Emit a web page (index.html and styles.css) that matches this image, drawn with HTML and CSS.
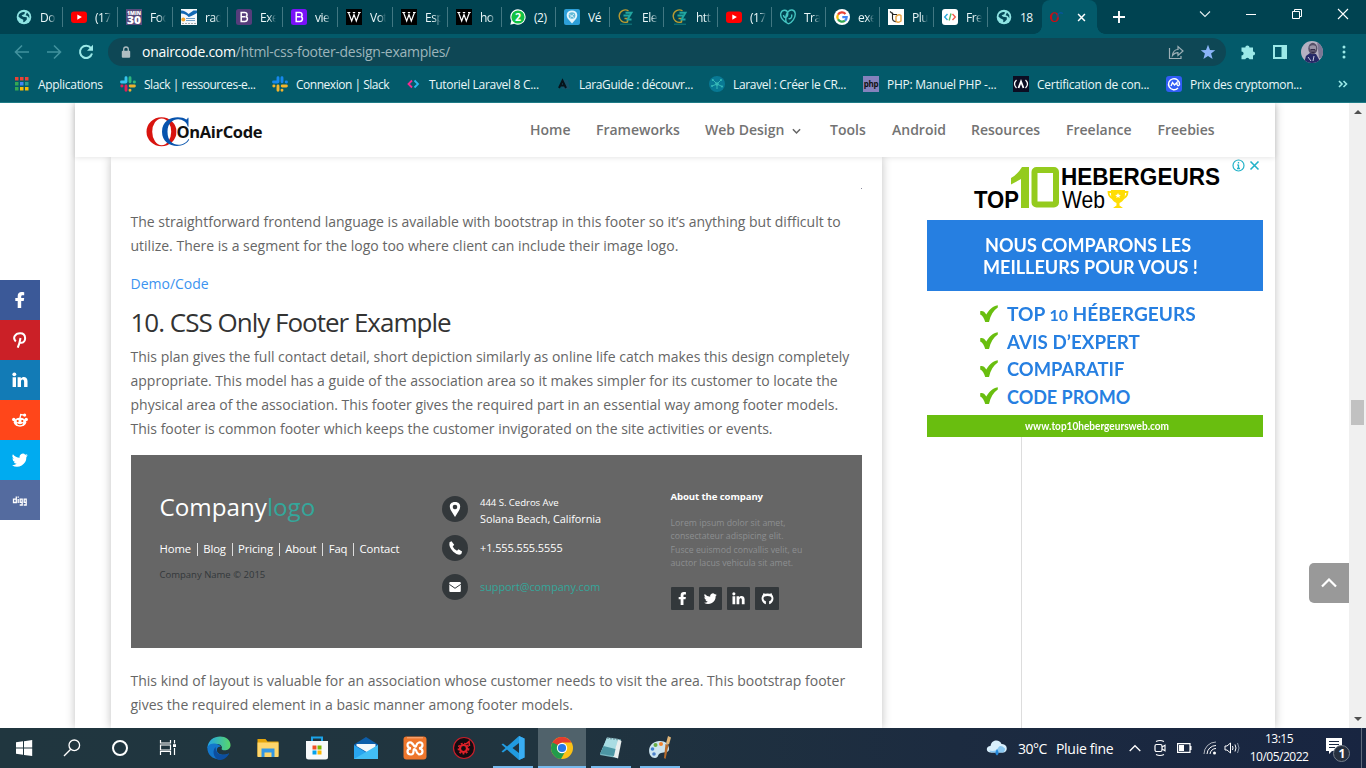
FILE: index.html
```html
<!DOCTYPE html>
<html lang="fr">
<head>
<meta charset="utf-8">
<title>HTML CSS Footer Design Examples - OnAirCode</title>
<link rel="stylesheet" href="styles.css">
</head>
<body>
<svg class="defs" width="0" height="0">
  <symbol id="globe" viewBox="0 0 16 16"><circle cx="8" cy="8" r="7.300" fill="#8fe4e3"/><path d="M3 5.300C4.500 3.200 7.500 2.200 9 3.400L8.300 5.200L5.600 6.200L7 7.700L10.800 8.300L10.800 10.600L8.700 12.800L7.200 13.200L7.300 10.800L4.300 9.200L2.400 7.400ZM11 3.600L13.200 6L13.400 9.300L11.600 7.100L9.600 6.300Z" fill="#04495a"/></symbol>
  <symbol id="yt" viewBox="0 0 16 16"><rect y="2.500" width="16" height="11.500" rx="3" fill="#f00"/><path d="M6.300 5.500v5.200l4.600-2.600z" fill="#fff"/></symbol>
  <symbol id="boot" viewBox="0 0 16 16"><rect width="16" height="16" rx="2.500"/><path d="M5.200 3.600h3.500c3 0 3 3.700.8 4.100c2.800.4 2.500 4.700-.7 4.700H5.200zM5.500 7.800h3.500" fill="none" stroke="#fff" stroke-width="1.500"/></symbol>
  <symbol id="wiki" viewBox="0 0 16 16"><rect width="16" height="16" fill="#000"/><path d="M2.500 3.500l3.200 8.500L8 5.500l2.300 6.500L13.500 3.500M1.300 3.500h3M6.800 3.500h2.400M12 3.500h2.700" fill="none" stroke="#fff" stroke-width="1.200"/></symbol>
  <symbol id="gz" viewBox="0 0 16 16"><path d="M10.500 1.800A6.200 6.200 0 1 0 9.500 13L10 9.500H6.500" fill="none" stroke="#b99b32" stroke-width="1.400"/><path d="M7.500 3.800h6L9.500 10.500h4M5.500 6.500h7" fill="none" stroke="#21a6a0" stroke-width="1.900"/><path d="M2 15.200h12" stroke="#137f82"/></symbol>
  <symbol id="slack" viewBox="0 0 16 16"><g stroke-width="2.900" stroke-linecap="round"><path d="M6 1.800v4M1.500 6h4.200" stroke="#36c5f0"/><path d="M10 1.800v4M14.500 6h-.3" stroke="#2eb67d"/><path d="M10.200 10h4.200M10 14.300v-.2" stroke="#ecb22e"/><path d="M6 10v4.200M1.800 10h.2" stroke="#e01e5a"/></g></symbol>
  <symbol id="fb" viewBox="0 0 16 16"><path d="M5.700 16V9H3.300V6h2.400V4C5.700 1.500 7.300.1 9.500.1c1.300 0 2.400.1 2.700.2v2.900h-1.500c-1.200 0-1.500.6-1.500 1.400V6h3L11.700 9H9.200v7z" fill="#fff"/></symbol>
  <symbol id="tw" viewBox="0 0 24 24"><path d="M23.600 4.900a9.700 9.700 0 0 1-2.700.8 4.900 4.900 0 0 0 2.100-2.700 9.800 9.800 0 0 1-3.100 1.200A4.900 4.900 0 0 0 11.500 8.700 14 14 0 0 1 1.400 3.500 4.900 4.900 0 0 0 2.900 10a4.900 4.900 0 0 1-2.200-.6 4.900 4.900 0 0 0 3.900 4.900 5 5 0 0 1-2.200.1 4.900 4.900 0 0 0 4.600 3.400A9.900 9.900 0 0 1 0 19.800 13.900 13.900 0 0 0 21.500 7.400 10 10 0 0 0 23.600 4.900z" fill="#fff"/></symbol>
  <symbol id="li" viewBox="0 0 16 16"><circle cx="2.300" cy="2.300" r="1.900" fill="#fff"/><path d="M.6 5.200h3.400V15H.6zM5.600 5.200h3.200v1.500C10.300 4 15.500 4.200 15.500 9v6h-3.400V9.800c0-3-3.100-2.800-3.100 0V15H5.600z" fill="#fff"/></symbol>
  <symbol id="check" viewBox="0 0 18 18"><path d="M.2 6.200C2.500 5.500 4.500 6.500 6.300 9.500C8.800 5.500 12 1 17.800.2V2.600C13.500 5.500 10.500 10.500 9 17H5.200C4.200 13.500 2.500 10.500.2 9.500z" fill="#69be0f"/></symbol>
</svg>

<header class="browser">
  <div class="tabstrip">
    <div class="tab wide"><svg class="fav"><use href="#globe"/></svg><span class="tab-title">Do</span></div>
    <div class="tab wide"><svg class="fav"><use href="#yt"/></svg><span class="tab-title">(17</span></div>
    <div class="tab wide"><svg class="fav" viewBox="0 0 16 16"><rect width="16" height="16" fill="#574c7d"/><text class="min-a" x="1" y="6" textLength="14" lengthAdjust="spacingAndGlyphs">1MIN</text><text class="min-b" x="1" y="14.500" textLength="14" lengthAdjust="spacingAndGlyphs">30</text></svg><span class="tab-title">Foo</span></div>
    <div class="tab wide"><svg class="fav" viewBox="0 0 16 16"><rect width="16" height="16" fill="#f4f8fb"/><path d="M0 1.500Q3.500 1 7.500 5L12.500 1.500H16V4Q9 8 7.500 8Q5 4.500 0 4.500z" fill="#1268b3"/><circle cx="2.300" cy="10.500" r="2" fill="#f3a52b"/><path d="M5 9.500h9M5 11.500h9" stroke="#6e9fc6"/><path d="M1 14.500h14" stroke="#aaa" stroke-dasharray="2 1"/></svg><span class="tab-title">rad</span></div>
    <div class="tab wide"><svg class="fav" fill="#563d7c"><use href="#boot"/></svg><span class="tab-title">Exe</span></div>
    <div class="tab wide"><svg class="fav" fill="#7911f8"><use href="#boot"/></svg><span class="tab-title">vie</span></div>
    <div class="tab wide"><svg class="fav"><use href="#wiki"/></svg><span class="tab-title">Vot</span></div>
    <div class="tab wide"><svg class="fav"><use href="#wiki"/></svg><span class="tab-title">Esp</span></div>
    <div class="tab"><svg class="fav"><use href="#wiki"/></svg><span class="tab-title">ho</span></div>
    <div class="tab"><svg class="fav" viewBox="0 0 16 16"><path d="M8 .3A7.700 7.700 0 1 1 4.300 14.800L.3 15.700L1.300 11.800A7.700 7.700 0 0 1 8 .3z" fill="#fff"/><circle cx="8" cy="8" r="6.600" fill="#12c143"/><text class="wa" x="5" y="12">2</text></svg><span class="tab-title solid">(2)</span></div>
    <div class="tab"><svg class="fav" viewBox="0 0 16 16"><rect width="16" height="16" rx="2" fill="#2d9fd8"/><path d="M8 1.500c-6 0-6.500 6-3.500 9L8 14.500l3.500-4C14.500 7.500 14 1.500 8 1.500z" fill="#e4f5fc"/><circle cx="8" cy="6.500" r="3.300" fill="#61b9d7"/><path d="M5.500 5.500L10 8.500M6 8.500L10 5" stroke="#fff" stroke-width=".7"/></svg><span class="tab-title solid">Vé</span></div>
    <div class="tab"><svg class="fav"><use href="#gz"/></svg><span class="tab-title">Ele</span></div>
    <div class="tab"><svg class="fav"><use href="#gz"/></svg><span class="tab-title">htt</span></div>
    <div class="tab"><svg class="fav"><use href="#yt"/></svg><span class="tab-title">(17</span></div>
    <div class="tab"><svg class="fav" viewBox="0 0 16 16"><path d="M8.500 14.800C4 13-.5 8.500.9 4C2.200.2 7.500.2 7.800 4.500C7.800 9 3.500 9.500 3.500 6M6 13C5.500 9 6.500 4.500 8 3C10-.3 14.800.6 15.200 4.500C15.600 9 12 13.500 8.500 14.800M8.500 9.500C10 10.500 12.500 8.500 11.500 5.500" fill="none" stroke="#45c5c2" stroke-width="1.400"/></svg><span class="tab-title">Tra</span></div>
    <div class="tab"><svg class="fav" viewBox="0 0 16 16"><circle cx="8" cy="8" r="8" fill="#fff"/><g fill="none" stroke-width="2.200"><path d="M11.500 4.900A4.700 4.700 0 0 0 4 5.600" stroke="#ea4335"/><path d="M4 5.600A4.700 4.700 0 0 0 4 10.400" stroke="#fbbc05"/><path d="M4 10.400A4.700 4.700 0 0 0 11 11.600" stroke="#34a853"/><path d="M11 11.600A4.700 4.700 0 0 0 12.700 8.200H8.300" stroke="#4285f4"/></g></svg><span class="tab-title">exe</span></div>
    <div class="tab"><svg class="fav" viewBox="0 0 16 16"><rect width="16" height="16" fill="#fff"/><path d="M2 2.500L5.500 5.500H9M4.500 3.500v6.500q.5 3 4 2.500" fill="none" stroke="#252525" stroke-width="1.100"/><path d="M8 7.500q2.500-3 5-1V12q-3 2.500-5 0z" fill="none" stroke="#e8a343" stroke-width="1.400"/></svg><span class="tab-title">Plu</span></div>
    <div class="tab"><svg class="fav" viewBox="0 0 16 16"><rect width="16" height="16" rx="3" fill="#fff"/><g fill="none" stroke-width="1.400"><path d="M5.500 5L2.700 8l2.800 3" stroke="#28a9dd"/><path d="M9 4.500L7.200 11.500" stroke="#58bb63"/><path d="M10.500 5l2.800 3-2.800 3" stroke="#ef5b4c"/></g></svg><span class="tab-title">Fre</span></div>
    <div class="tab last"><svg class="fav"><use href="#globe"/></svg><span class="tab-title solid">18</span></div>
    <div class="tab active"><svg class="fav" viewBox="0 0 16 16"><path d="M5.500 3.300C-.6 3.300-.6 13 5.500 13s6.100-9.700 0-9.700zm0 .9c3.200 0 3.200 7.900 0 7.900s-3.200-7.900 0-7.900z" fill="#c41017" fill-rule="evenodd"/><path d="M14 4.500C10 2.500 8.500 5 9 8.500" fill="none" stroke="#07559a" stroke-width="1.300"/></svg><svg class="close" viewBox="0 0 10 10"><path d="M1.200 1.200l7.600 7.600M8.800 1.200L1.200 8.800" stroke="#fff" stroke-width="1.700"/></svg></div>
    <svg class="newtab" viewBox="0 0 12 12"><path d="M6 0v12M0 6h12" stroke="#fff" stroke-width="1.900"/></svg>
    <div class="winbtns">
      <svg viewBox="0 0 12 12"><path d="M1 3.500l5 5 5-5" fill="none" stroke="#e3eef0" stroke-width="1.100"/></svg>
      <svg viewBox="0 0 12 12"><path d="M1 6.500h10" stroke="#fff"/></svg>
      <svg viewBox="0 0 12 12"><path d="M1.500 3.500h7v7h-7zM3.500 3.500v-2h7v7h-2" fill="none" stroke="#fff"/></svg>
      <svg viewBox="0 0 12 12"><path d="M1 1l10 10M11 1L1 11" stroke="#fff" stroke-width="1.100"/></svg>
    </div>
  </div>

  <div class="toolbar">
    <svg class="nav-ic" viewBox="0 0 16 16"><path d="M15 8H2M8 1.500L1.500 8L8 14.500" fill="none" stroke="#41929e" stroke-width="1.600"/></svg>
    <svg class="nav-ic" viewBox="0 0 16 16"><path d="M1 8h13M8 1.500L14.500 8L8 14.500" fill="none" stroke="#41929e" stroke-width="1.600"/></svg>
    <svg class="nav-ic" viewBox="0 0 16 16"><path d="M13 4.200A6.100 6.100 0 1 0 14 9.500" fill="none" stroke="#9be9e8" stroke-width="2"/><path d="M15 .8v6H9z" fill="#9be9e8"/></svg>
    <div class="omnibox">
      <svg class="lock" viewBox="0 0 10 12"><rect x=".8" y="4.800" width="8.400" height="7" rx="1" fill="#aebdc1"/><path d="M2.700 5V3.300a2.300 2.300 0 0 1 4.600 0V5" fill="none" stroke="#aebdc1" stroke-width="1.300"/></svg>
      <span class="url"><b>onaircode.com</b>/html-css-footer-design-examples/</span>
      <svg class="share-ic" viewBox="0 0 16 16"><path d="M1.500 4v10.500h11.500V12M4.500 11.500C5 7.500 7.500 5.500 10 5.500V2.500L15 7l-5 4.500V8.700C7.500 8.500 6 9.500 4.500 11.500z" fill="none" stroke="#9db0b6" stroke-width="1.200"/></svg>
      <svg class="star" viewBox="0 0 16 16"><path d="M8 .8l2 5.100 5.300.3-4.200 3.400 1.500 5.300L8 11.900l-4.600 3 1.500-5.300L.7 6.200 6 5.900z" fill="#8ab4f8"/></svg>
    </div>
    <svg class="ext" viewBox="0 0 16 16"><path d="M1.500 3.500h3.800a2.100 2.100 0 1 1 4.200 0H13v3.900a2.100 2.100 0 1 1 0 4.200v3.600H9.500a2.200 2.200 0 0 0-4.200 0H1.500v-3.600a2.100 2.100 0 0 0 0-4.200z" fill="#9be9e8"/></svg>
    <svg class="side" viewBox="0 0 14 14"><path d="M0 0h14v14H0zM2 2v10h6.500V2z" fill="#9be9e8" fill-rule="evenodd"/></svg>
    <svg class="avatar" viewBox="0 0 22 22"><clipPath id="av"><circle cx="11" cy="11" r="11"/></clipPath><g clip-path="url(#av)"><path d="M0 0h22v22H0z" fill="#b5b1c2"/><path d="M16 0h7v17h-5z" fill="#7c7795"/><path d="M3 22L5 15L9 12L15 13L20 22z" fill="#252967"/><ellipse cx="11.800" cy="7.500" rx="4.500" ry="5.800" fill="#565068"/><path d="M8.500 5.500Q12 3 15 5.500v3Q12 10 9 8.500z" fill="#9a93a6"/><path d="M9.500 8.500h4.500M10.500 11.500h3" stroke="#332b4a"/><path d="M7 16l3 4M13 15l-1 5" fill="none" stroke="#c7c9df"/></g></svg>
    <svg class="dots" viewBox="0 0 4 14"><g fill="#9be9e8"><circle cx="2" cy="2" r="1.500"/><circle cx="2" cy="7" r="1.500"/><circle cx="2" cy="12" r="1.500"/></g></svg>
  </div>

  <div class="bookmarks">
    <div class="bm b1"><svg viewBox="0 0 16 16"><g fill="#ea4335"><path d="M1 1h3.500v3.500H1zM6 1h3.500v3.500H6zM11 1h3.500v3.500H11z"/></g><path d="M1 6h3.500v3.500H1zM1 11h3.500v3.500H1z" fill="#34a853"/><path d="M6 6h3.500v3.500H6z" fill="#4285f4"/><path d="M11 6h3.500v3.500H11z" fill="#2e9d8b"/><path d="M6 11h3.500v3.500H6zM11 11h3.500v3.500H11z" fill="#fbbc05"/></svg><span>Applications</span></div>
    <div class="bm b2"><svg><use href="#slack"/></svg><span>Slack | ressources-e...</span></div>
    <div class="bm b3"><svg viewBox="0 0 16 16"><g stroke-width="2.900" stroke-linecap="round"><path d="M6 1.800v4M1.500 6h4M10 1.800v4M14.500 6h-.3" stroke="#1688ee"/><path d="M10.200 10h4.200M10 14.300v-.2M6 10v4.200M1.800 10h.2" stroke="#f5b52c"/></g></svg><span>Connexion | Slack</span></div>
    <div class="bm b4"><svg viewBox="0 0 16 16"><path d="M7 4.500L3.500 8L7 11.500" fill="none" stroke="#f52b90" stroke-width="1.800"/><path d="M9.500 4.500L13 8l-3.500 3.500" fill="none" stroke="#2bb8ee" stroke-width="1.800"/></svg><span>Tutoriel Laravel 8 C...</span></div>
    <div class="bm b5"><svg viewBox="0 0 16 16"><path d="M6 4h7l2 9H7z" fill="#17536a"/><path d="M4 12L7.500 4.500L11 12M5.500 9.500h5" fill="none" stroke="#07121a" stroke-width="2"/></svg><span>LaraGuide : découvr...</span></div>
    <div class="bm b6"><svg viewBox="0 0 16 16"><circle cx="8" cy="8" r="8" fill="#087994"/><g opacity=".85"><path d="M8 8L4 4M8 8l4-4M8 8l5 2.500M8 8l-5 2M8 8v5" stroke="#3fc3be"/><g fill="#3fc3be"><circle cx="8" cy="8" r="1.800"/><circle cx="3.800" cy="4" r="1"/><circle cx="12" cy="4" r="1"/><circle cx="3" cy="10" r="1"/><circle cx="13" cy="10.500" r="1"/></g></g></svg><span>Laravel : Créer le CR...</span></div>
    <div class="bm b7"><svg viewBox="0 0 16 16"><rect width="16" height="16" fill="#8582bd"/><text class="php" x=".7" y="11" textLength="14.600" lengthAdjust="spacingAndGlyphs">php</text></svg><span>PHP: Manuel PHP -...</span></div>
    <div class="bm b8"><svg viewBox="0 0 16 16"><rect width="16" height="16" fill="#0c0d22"/><path d="M3.500 4Q-.5 8 3.500 12M12.500 4Q16.500 8 12.500 12" fill="none" stroke="#fff" stroke-width="1.200"/><path d="M5.500 12L8 5.500L10.500 12" fill="none" stroke="#fff" stroke-width="1.800"/></svg><span>Certification de con...</span></div>
    <div class="bm b9"><svg viewBox="0 0 16 16"><rect width="16" height="16" rx="3" fill="#315cf5"/><path d="M12 12A5.500 5.500 0 1 1 13.500 8.500Q12.200 11 11 8.500V6.500L8.500 9L6.500 6.500L5 10" fill="none" stroke="#fff" stroke-width="1.400"/></svg><span>Prix des cryptomon...</span></div>
    <svg class="more" viewBox="0 0 10 8"><path d="M1 1l3 3-3 3M5.500 1l3 3-3 3" fill="none" stroke="#9be9e8" stroke-width="1.600"/></svg>
  </div>
</header>

<main class="viewport">
  <div class="page">
    <nav class="site-head">
      <svg class="logo" viewBox="0 0 120 34"><path fill-rule="evenodd" d="M1.500 16.800a15 14.500 0 1 0 30 0a15 14.500 0 1 0-30 0zM7.200 16.800a9.500 13.400 0 1 1 19 0a9.500 13.400 0 1 1-19 0z" fill="#d8140f"/><path d="M43.500 2.800v9h-.8C41 1.500 22.500 .5 22.500 16.800C22.500 33 39 32.500 43.500 24l.7.500C39.500 34.500 17 33.500 17 16.800C17 .8 35.500 .5 41.200 4.500Q42.500 4.500 42.700 2.800z" fill="#0753ad"/><text class="logo-text" x="31.500" y="23.200" textLength="86">OnAirCode</text></svg>
      <ul class="menu">
        <li class="m1">Home</li><li class="m2">Frameworks</li><li class="m3">Web Design<svg viewBox="0 0 8 6"><path d="M.8 1l3.200 3.300L7.200 1" fill="none" stroke="#666" stroke-width="1.400"/></svg></li><li class="m4">Tools</li><li class="m5">Android</li><li class="m6">Resources</li><li class="m7">Freelance</li><li class="m8">Freebies</li>
      </ul>
    </nav>
    <div class="columns">
      <article class="post">
        <div class="speck"></div>
        <p>The straightforward frontend language is available with bootstrap in this footer so it’s anything but difficult to<br>utilize. There is a segment for the logo too where client can include their image logo.</p>
        <p><a class="demo">Demo/Code</a></p>
        <h2>10. CSS Only Footer Example</h2>
        <p>This plan gives the full contact detail, short depiction similarly as online life catch makes this design completely<br>appropriate. This model has a guide of the association area so it makes simpler for its customer to locate the<br>physical area of the association. This footer gives the required part in an essential way among footer models.<br>This footer is common footer which keeps the customer invigorated on the site activities or events.</p>
        <section class="demo-footer">
          <div class="df-left">
            <div class="df-logo">Company<span>logo</span></div>
            <div class="df-links"><span>Home</span><i></i><span>Blog</span><i></i><span>Pricing</span><i></i><span>About</span><i></i><span>Faq</span><i></i><span>Contact</span></div>
            <div class="df-copy">Company Name © 2015</div>
          </div>
          <div class="df-mid">
            <div class="row"><b class="round"><svg viewBox="0 0 26 26"><path d="M13 6c-6 0-6 5.500-4 8.500l4 6.500 4-6.500c2-3 2-8.500-4-8.500zm0 2.700a2.300 2.300 0 1 1 0 4.600 2.300 2.300 0 0 1 0-4.600z" fill="#fff" fill-rule="evenodd"/></svg></b><span class="addr"><em>444 S. Cedros Ave</em><br>Solana Beach, California</span></div>
            <div class="row"><b class="round"><svg viewBox="0 0 26 26"><path d="M7.500 7.200l2-1 2.700 3.600-1.500 1.700q1.400 3 4.300 4.300l1.500-1.600 3.600 2.400-.8 2.400q-3.300 2-8-2.300-4.700-4.600-3.800-9.500z" fill="#fff"/></svg></b><span class="tel">+1.555.555.5555</span></div>
            <div class="row"><b class="round"><svg viewBox="0 0 26 26"><rect x="7.300" y="8" width="11.500" height="10" rx="1" fill="#fff"/><path d="M7.300 10.300l5.700 4 5.800-4" fill="none" stroke="#33383b"/></svg></b><span class="mail">support@company.com</span></div>
          </div>
          <div class="df-right">
            <h4>About the company</h4>
            <p>Lorem ipsum dolor sit amet,<br>consectateur adispicing elit.<br>Fusce euismod convallis velit, eu<br>auctor lacus vehicula sit amet.</p>
            <div class="df-soc">
              <b><svg><use href="#fb"/></svg></b><b><svg><use href="#tw"/></svg></b><b><svg><use href="#li"/></svg></b><b><svg viewBox="0 0 16 16"><path d="M6 15A7.300 7.300 0 0 1 2.500 3.200L2.800 1.500l2.500.8q2.700-.9 5.400 0l2.500-.8.300 1.700A7.300 7.300 0 0 1 10 15V11.500q3-.8 3-3.700Q12.500 4.800 8 4.800T3 7.800Q3 10.700 6 11.500z" fill="#fff"/></svg></b>
            </div>
          </div>
        </section>
        <p class="after">This kind of layout is valuable for an association whose customer needs to visit the area. This bootstrap footer<br>gives the required element in a basic manner among footer models.</p>
      </article>
      <aside class="sidebar">
        <div class="ad">
          <svg class="ad-logo" viewBox="0 0 336 63"><text class="al-top" x="47" y="50.500" textLength="45" lengthAdjust="spacingAndGlyphs">TOP</text><path d="M95 10h7v41h-8V22l-10 5.500v-6.500Q91 17 95 10z" fill="#94cb1e"/><rect x="107.500" y="13" width="21.500" height="34.500" rx="2" fill="none" stroke="#94cb1e" stroke-width="6"/><text class="al-heb" x="134" y="28" textLength="159" lengthAdjust="spacingAndGlyphs">HEBERGEURS</text><text class="al-web" x="135" y="51" textLength="43" lengthAdjust="spacingAndGlyphs">Web</text><path d="M184 33h14v3c0 6-1.500 8-5.500 10v2.500l3.500 2.500h-10l3.500-2.500V46c-4-2-5.500-4-5.500-10z" fill="#ffdd05"/><path d="M184 35h-2.500q0 5 5.500 7M198 35h2.500q0 5-5.500 7" fill="none" stroke="#ffdd05" stroke-width="1.800"/><path d="M191 36l.8 1.800 2 .1-1.500 1.300.5 1.900-1.800-1-1.700 1 .5-1.900-1.600-1.300 2-.1z" fill="#fff"/><circle cx="311.500" cy="8.500" r="5.500" fill="#fff" stroke="#22b2c8" stroke-width="1.200"/><path d="M311.500 7.500v4M311.500 5v1.400M310.300 8h1M310 11.500h3" stroke="#22b2c8" stroke-width="1.300"/><path d="M323.500 4.500l8 8M331.500 4.500l-8 8" stroke="#22b2c8" stroke-width="1.600"/></svg>
          <div class="ad-blue"><span class="a1">NOUS COMPARONS LES</span><span class="a2">MEILLEURS POUR VOUS !</span></div>
          <ul class="ad-list">
            <li class="l1"><svg><use href="#check"/></svg><span>TOP <small>10</small> HÉBERGEURS</span></li>
            <li class="l2"><svg><use href="#check"/></svg><span>AVIS D’EXPERT</span></li>
            <li class="l3"><svg><use href="#check"/></svg><span>COMPARATIF</span></li>
            <li class="l4"><svg><use href="#check"/></svg><span>CODE PROMO</span></li>
          </ul>
          <div class="ad-url"><span>www.top10hebergeursweb.com</span></div>
        </div>
        <div class="rule"></div>
      </aside>
    </div>
  </div>

  <div class="socials">
    <b class="s-fb"><svg><use href="#fb"/></svg></b>
    <b class="s-pi"><svg viewBox="0 0 16 16"><path d="M5.700 15.700Q7.500 12 8.500 6M3.800 9.500C.3 6 3 1.200 8.200 1.200C15 1.200 14 10.800 9.700 10.800Q8 10.800 7.200 9.500" fill="none" stroke="#fff" stroke-width="2"/></svg></b>
    <b class="s-li"><svg><use href="#li"/></svg></b>
    <b class="s-re"><svg viewBox="0 0 18 18"><ellipse cx="9" cy="11.500" rx="7" ry="5" fill="#fff"/><circle cx="2" cy="8.500" r="1.900" fill="#fff"/><circle cx="16" cy="8.500" r="1.900" fill="#fff"/><path d="M9 7l.8-4.200 4 .7" fill="none" stroke="#fff" stroke-width="1.500"/><circle cx="14.200" cy="3.500" r="1.800" fill="#fff"/><circle cx="6.400" cy="10.200" r="1.200" fill="#ff4500"/><circle cx="11.600" cy="10.200" r="1.200" fill="#ff4500"/><path d="M5.800 13Q9 15.700 12.200 13" fill="none" stroke="#ff4500" stroke-width="1.200"/></svg></b>
    <b class="s-tw"><svg><use href="#tw"/></svg></b>
    <b class="s-di"><svg viewBox="0 0 16 16"><path d="M4.300 4.500v6H1.500V7.200h2.800M6.200 7v4M6.200 4.500v1.200M10.200 10.400H8.200V7.200h2v5.800H7.700M14.200 10.400h-2V7.200h2v5.800H11.700" fill="none" stroke="#fff" stroke-width="1.300"/></svg></b>
  </div>
  <div class="totop"><svg viewBox="0 0 16 10"><path d="M1 8.500l7-7 7 7" fill="none" stroke="#fff" stroke-width="2.200"/></svg></div>
  <div class="scrollbar"><svg viewBox="0 0 8 4"><path d="M0 4l4-4 4 4z" fill="#505050"/></svg><i></i><svg viewBox="0 0 8 4"><path d="M0 0h8L4 4z" fill="#505050"/></svg></div>
</main>

<footer class="taskbar">
  <div class="tb w"><svg viewBox="0 0 24 24"><path d="M4 6.300l7-1v6.300H4zM12 5.200l8.200-1.200v7.600H12zM4 12.500h7v6.300l-7-1zM12 12.500h8.200V20L12 18.900z" fill="#fff"/></svg></div>
  <div class="tb w"><svg viewBox="0 0 24 24"><circle cx="14.300" cy="9.300" r="5.300" fill="none" stroke="#fff" stroke-width="1.300"/><path d="M10.700 13.200L4 20" stroke="#fff" stroke-width="1.300"/></svg></div>
  <div class="tb w"><svg viewBox="0 0 24 24"><circle cx="12" cy="12" r="7" fill="none" stroke="#fff" stroke-width="2"/></svg></div>
  <div class="tb w"><svg viewBox="0 0 24 24"><path d="M4.500 4v3h10V4M4.500 19v-3.500h10V19M4.500 9h10v5h-10zM18.500 4v3.500M18.500 12v7" fill="none" stroke="#fff" stroke-width="1.200"/><path d="M17 8.200h3v2.800h-3z" fill="#fff"/></svg></div>
  <div class="apps">
    <div class="tb"><svg viewBox="0 0 24 24"><defs><linearGradient id="eg"><stop stop-color="#22a4e8"/><stop offset="1" stop-color="#58d76a"/></linearGradient></defs><path d="M.5 12C1-3 24-3 23.500 9.500C23 15.500 15 15 14.500 13C16.500 10 12 6.500 7 8.500Q2 10 .5 12z" fill="url(#eg)"/><path d="M.3 11C3 6 12 6.500 14 11C9 9.500 8 17 14 18.500C18 19.500 20.500 18 22 17.500C16 27 0 24.500.3 11z" fill="#1376cb"/><path d="M8.500 11C4 16 8 24 13 24C18 23.700 21 20 22 17.500Q9 22 8.500 11z" fill="#0c4e9f"/></svg></div>
    <div class="tb"><svg viewBox="0 0 24 24"><path d="M1.500 3h8l2 2.500h11V20H1.500z" fill="#e5a50b"/><path d="M1.500 6.500h21V21h-21z" fill="#ffd66c"/><path d="M5.500 21v-8.500h13V21h-3v-4.500h-7V21z" fill="#3497e4"/></svg></div>
    <div class="tb"><svg viewBox="0 0 24 24"><path d="M7 6V1.500h10V6" fill="none" stroke="#1ba3e8" stroke-width="2"/><path d="M1 5h22v16q0 2.500-2.500 2.500h-17Q1 23.500 1 21z" fill="#f7f9fa"/><path d="M7.500 9.500h4v4h-4z" fill="#f15025"/><path d="M12.500 9.500h4v4h-4z" fill="#7db801"/><path d="M7.500 14.500h4v4h-4z" fill="#04a2ec"/><path d="M12.500 14.500h4v4h-4z" fill="#fcb704"/></svg></div>
    <div class="tb"><svg viewBox="0 0 24 24"><path d="M0 8.500L12 1l12 7.500V23H0z" fill="#0d5eaa"/><path d="M2.500 8h19v3L13.500 16.500 2.500 10z" fill="#f4f8fb"/><path d="M0 9l13 8 11-8v14H0z" fill="#29a5ef"/><path d="M0 23L24 9V23z" fill="#42bef5"/></svg></div>
    <div class="tb"><svg viewBox="0 0 24 24"><rect x=".5" y=".5" width="23" height="23" rx="3" fill="#ee762c"/><path d="M4 1.800h16" stroke="#f9b286"/><path d="M8 6.500Q4.500 6 4.500 9T8 12.300Q4.500 12.500 4.500 15.500T8 18.500Q10.500 18.500 10.500 15.500T12 13.500T13.500 15.500T16 18.500Q19.500 18.500 19.500 15.500T16 12.300Q19.500 12 19.500 9T16 6.500Q14 7 13.500 9T12 10.500T10.500 9T8 6.500z" fill="none" stroke="#fff" stroke-width="2.200"/></svg></div>
    <div class="tb"><svg viewBox="0 0 24 24"><circle cx="12" cy="12" r="10.500" fill="#140c11" stroke="#c91f2a" stroke-width="1.200"/><circle cx="11.500" cy="12.500" r="3.500" fill="none" stroke="#e32129" stroke-width="2.200"/><circle cx="11.500" cy="12.500" r="5.200" fill="none" stroke="#e32129" stroke-width="1.400" stroke-dasharray="2 1.500"/><path d="M14 8l3-2.500.5 4.500" stroke="#e32129" stroke-width="1.600" fill="none"/></svg></div>
    <div class="tb run"><svg viewBox="0 0 24 24"><path d="M18 0l5.500 2.500v19L18 24L6 13.500 2 16.500.5 15.500 4.500 12 .5 8.500 2 7.500l4 3zM18 7l-6.500 5 6.500 5z" fill="#219be0" fill-rule="evenodd"/><path d="M18 0l5.500 2.500v19L18 24z" fill="#39adf3"/></svg></div>
    <div class="tb run on"><svg viewBox="0 0 24 24"><circle cx="12" cy="12" r="11" fill="#fbc116"/><path d="M2.500 6.500A11 11 0 0 1 21.500 6.500H12L7.300 15z" fill="#e33b2e"/><path d="M2.500 6.500A11 11 0 0 0 11 23l5-9-4-3z" fill="#229b4c"/><circle cx="12" cy="12" r="5.200" fill="#fff"/><circle cx="12" cy="12" r="4.100" fill="#2677e8"/></svg></div>
    <div class="tb run"><svg viewBox="0 0 24 24"><path d="M8 1.500l14 2 -4 18.500L1 19z" fill="#7bb9c4"/><path d="M8 1.500l11 1.500-4 16.500L1 18z" fill="#a9dce3"/><path d="M19 3.500l3.500 1.500-3.500 17.500-5-2z" fill="#e9eeee"/><path d="M4.500 10l12 3-1.500 7L1 18z" fill="#4c96a4"/><path d="M9 1v2M12 1.400v2M15 1.800v2M18 2.200v2" stroke="#536f78"/></svg></div>
    <div class="tb run"><svg viewBox="0 0 24 24"><path d="M11 5C-2 6-1 22 7 22c4 0 2-4 6-5 3-1 8 0 8-4C21 8 17 4.500 11 5z" fill="#cce4ef"/><circle cx="4.500" cy="13" r="1.800" fill="#3e80d1"/><circle cx="7.500" cy="9" r="2" fill="#68ae45"/><circle cx="13" cy="8" r="2" fill="#ef8331"/><circle cx="6" cy="18" r="1.800" fill="#4c80c8"/><path d="M20 0l3 1.500-2 7-3-1z" fill="#e2b678"/><path d="M17.500 8l3 1-3 14-1.500-1z" fill="#b96c2b"/></svg></div>
  </div>
  <div class="tray">
    <svg class="cloud" viewBox="0 0 22 18"><path d="M5 13.500C-1 13 0 7 4.500 7C5.500 0 14 0 15.500 5C22 4.500 22.500 13 17 13.500z" fill="#d9effc"/><path d="M3 11.500Q10 13 12 9T19 9.500Q19 13 17 13.500H5z" fill="#8ac7f0"/><path d="M11 10Q7.800 14.500 11 16.500Q14.200 14.500 11 10z" fill="#2288dd"/></svg>
    <span class="temp">30°C</span><span class="wx">Pluie fine</span>
    <svg class="t-chev" viewBox="0 0 12 8"><path d="M.7 7L6 1.700 11.300 7" fill="none" stroke="#fff" stroke-width="1.300"/></svg>
    <svg class="t-meet" viewBox="0 0 14 18"><rect x="2" y="5.500" width="7" height="7" rx="1.500" fill="none" stroke="#fff" stroke-width="1.200"/><path d="M9 8l3-1.700v5.400L9 10M3 2.500Q7 .5 11 2.500M3 15.500q4 2 8 0" fill="none" stroke="#fff" stroke-width="1.100"/></svg>
    <svg class="t-bat" viewBox="0 0 15 10"><path d="M.6.6h12.400v8.800H.6z" fill="none" stroke="#fff" stroke-width="1.200"/><path d="M2 2h5v6H2zM13 3h1.500v4H13z" fill="#fff"/></svg>
    <svg class="t-wifi" viewBox="0 0 14 14"><g fill="none" stroke="#fff"><path d="M1 13A12 12 0 0 1 13 1" opacity=".65"/><path d="M4 13a9 9 0 0 1 9-8.500M7 13a6 6 0 0 1 6-5.500"/></g><circle cx="11.500" cy="12" r="1.500" fill="#fff"/></svg>
    <svg class="t-vol" viewBox="0 0 17 12"><path d="M1 4h2l3.500-3v10L3 8H1z" fill="none" stroke="#fff"/><path d="M8.500 4q1 2 0 4M11 2.500q2 3.500 0 7" fill="none" stroke="#fff"/><path d="M13.500 1q3 5 0 10" fill="none" stroke="#8792a5"/></svg>
    <div class="clock"><span>13:15</span><span class="date">10/05/2022</span></div>
    <svg class="t-note" viewBox="0 0 26 26"><path d="M1 1h16v13H7l-3 3v-3H1z" fill="#fff"/><path d="M4 4.500h10M4 7.500h10M4 10.500h6" stroke="#1a2942"/><circle cx="16.500" cy="16.500" r="8" fill="#27303f" stroke="#77808c"/><text class="note-n" x="13.500" y="21">1</text></svg>
    <i class="peek"></i>
  </div>
</footer>
</body>
</html>
```
FILE: styles.css
```css
* { box-sizing: border-box; }
html, body { margin: 0; width: 1366px; height: 768px; overflow: hidden; }
body { display: flex; flex-direction: column; background: #fff; font-family: "Open Sans", sans-serif; }
svg { display: block; flex: none; }
b, em, i { font-style: normal; }
.defs { position: absolute; }

/* browser chrome */
.browser { height: 103px; flex: none; background: #035a6a; border-bottom: 1px solid #1e7b86; color: #eaf7f8; font-size: 12px; }
.tabstrip { height: 34px; background: #004351; display: flex; padding-left: 8px; }
.tab { width: 54px; height: 34px; display: flex; align-items: center; padding-left: 8px; gap: 8px; position: relative; }
.tab.wide { width: 55px; }
.tab::after { content: ""; position: absolute; right: 0; top: 7px; width: 1px; height: 20px; background: #417782; }
.tab.last::after, .tab.active::after { display: none; }
.fav { width: 16px; height: 16px; }
.tab-title { width: 16px; overflow: hidden; white-space: nowrap; font-size: 12px; -webkit-mask-image: linear-gradient(90deg, #000 55%, transparent); mask-image: linear-gradient(90deg, #000 55%, transparent); letter-spacing: -.5px; }
.tab-title.solid { -webkit-mask-image: none; mask-image: none; }
.tab.active { width: 55px; background: #035a6a; border-radius: 8px 8px 0 0; padding-left: 7px; gap: 12px; }
.tab.active::before { content: ""; position: absolute; left: -8px; right: -8px; bottom: 0; height: 8px; background: radial-gradient(circle at 0 0, transparent 7.5px, #035a6a 8px) 0 0/8px 8px no-repeat, radial-gradient(circle at 100% 0, transparent 7.5px, #035a6a 8px) 100% 0/8px 8px no-repeat; }
.close { width: 9px; height: 9px; }
.newtab { width: 12px; height: 12px; margin: 11px 0 0 16px; }
.winbtns { margin-left: auto; display: flex; gap: 34px; padding: 8px 17px 0 0; }
.winbtns svg { width: 12px; height: 12px; }
.min-a { font: 800 5.500px "Open Sans"; fill: #fff; }
.min-b { font: 800 10.500px "Open Sans"; fill: #fff; }
.wa { font: 700 10.500px "Open Sans"; fill: #fff; }
.php { font: 700 8px "Open Sans"; fill: #111; }
.toolbar { height: 36px; display: flex; align-items: center; padding-left: 14px; }
.nav-ic { width: 16px; height: 16px; margin-right: 16px; }
.omnibox { width: 1118px; height: 28px; margin-left: -2px; border-radius: 14px; background: #0e4755; display: flex; align-items: center; padding: 0 10px 0 13px; }
.lock { width: 10px; height: 12px; }
.url { margin-left: 11px; flex: 1; font-size: 14px; color: #9db5bb; letter-spacing: -.29px; line-height: 20px; }
.url b { font-weight: 400; color: #fff; }
.share-ic { width: 16px; height: 16px; margin-right: 16px; }
.star { width: 16px; height: 16px; }
.ext { width: 16px; height: 16px; margin-left: 14px; }
.side { width: 14px; height: 14px; margin-left: 17px; }
.avatar { width: 22px; height: 22px; margin-left: 14px; }
.dots { width: 4px; height: 14px; margin-left: 19px; }
.bookmarks { height: 28px; display: flex; padding-left: 14px; position: relative; }
.bm { display: flex; align-items: center; gap: 8px; white-space: nowrap; font-size: 12px; letter-spacing: -.3px; }
.bm svg { width: 16px; height: 16px; }
.b1 { width: 106px; } .b2 { width: 152px; letter-spacing: -.46px; } .b3 { width: 133px; letter-spacing: -.48px; } .b4 { width: 150px; } .b5 { width: 154px; letter-spacing: -.36px; } .b6 { width: 154px; letter-spacing: -.33px; } .b7 { width: 150px; letter-spacing: -.25px; } .b8 { width: 153px; letter-spacing: -.25px; }
.more { width: 10px; height: 8px; position: absolute; right: 18px; top: 10px; }

/* page */
.viewport { height: 625px; flex: none; position: relative; overflow: hidden; background: #fff; }
.page { width: 1200px; height: 625px; margin-left: 75px; box-shadow: 0 0 9px rgba(0,0,0,.25); }
.site-head { height: 54px; background: #fff; display: flex; position: relative; z-index: 2; box-shadow: 0 1px 5px rgba(0,0,0,.1); }
.logo { width: 120px; height: 34px; margin: 12px 0 0 70px; }
.logo-text { font: 700 16.500px "Open Sans"; fill: #111; stroke: #fff; stroke-width: 1.200px; paint-order: stroke; }
.menu { list-style: none; margin: 0 0 0 265px; padding: 0; display: flex; color: #737373; font-size: 14px; font-weight: 600; line-height: 54px; white-space: nowrap; }
.menu li { display: flex; align-items: center; }
.menu svg { width: 9px; height: 7px; margin: 2px 0 0 8px; }
.m1 { width: 66px; } .m2 { width: 109px; } .m3 { width: 125px; } .m4 { width: 62px; } .m5 { width: 79px; } .m6 { width: 95px; } .m7 { width: 91.500px; }
.columns { display: flex; height: 571px; padding-left: 36px; gap: 45px; }
.post { width: 771px; padding: 31px 20.500px 0 19.500px; box-shadow: 0 0 9px rgba(0,0,0,.25); color: #666; font-size: 14px; line-height: 24px; white-space: nowrap; }
.post p { margin: 0 0 14px; }
.speck { width: 1px; height: 1px; background: #8a8a9c; margin: 0 0 21px auto; }
.demo { color: #3b93f0; }
.post h2 { margin: -2px 0 9px; font-size: 26px; font-weight: 400; line-height: 28px; color: #333; letter-spacing: -1px; }
.demo-footer { width: 731px; height: 193px; background: #666; margin-bottom: 21px; display: flex; color: #fff; }
.df-left { width: 311px; padding: 34px 0 0 29px; }
.df-logo { font-size: 24.200px; line-height: 36px; }
.df-logo span { color: #34a79b; }
.df-links { display: flex; align-items: center; margin-top: 14px; height: 20px; font-size: 11.300px; letter-spacing: -.1px; }
.df-links i { width: 1px; height: 13px; background: #ddd; margin: 0 5.500px 0 5.700px; }
.df-copy { font-size: 9.500px; line-height: 14px; margin-top: 9px; color: #33383b; }
.df-mid { width: 229px; padding-top: 41px; display: flex; flex-direction: column; gap: 13px; font-size: 10.900px; letter-spacing: -.05px; }
.row { display: flex; align-items: center; height: 26px; gap: 12.500px; }
.round { width: 26px; height: 26px; border-radius: 50%; background: #33383b; }
.round svg { width: 26px; height: 26px; }
.addr { line-height: 16.500px; margin-top: 3px; }
.addr em { font-size: 9.600px; }
.mail { color: #34a79b; }
.df-right h4 { margin: 34px 0 13px; font-size: 9.600px; line-height: 15px; letter-spacing: -.1px; }
.df-right p { margin: 0 0 16.500px; font-size: 8.750px; line-height: 13.300px; color: #8d8f91; }
.df-soc { display: flex; gap: 5px; }
.df-soc b { width: 23.300px; height: 23px; border-radius: 1px; background: #33383b; display: flex; align-items: center; justify-content: center; }
.df-soc svg { width: 13px; height: 13px; }

/* sidebar advert */
.ad { width: 336px; height: 280px; background: #fff; white-space: nowrap; }
.ad span { display: inline-block; transform-origin: 0 50%; }
.ad-logo { width: 336px; height: 63px; }
.al-top { font: 700 24px "Liberation Sans"; }
.al-heb { font: 700 24px "Liberation Sans"; }
.al-web { font: 400 24px "Liberation Sans"; }
.ad-blue { height: 71px; background: #267fe1; color: #fff; font: 700 19px/22px Lato; padding-top: 14px; display: flex; flex-direction: column; }
.a1 { margin-left: 58px; transform: scaleX(.95); }
.a2 { margin-left: 56px; transform: scaleX(.948); }
.ad-list { height: 124px; margin: 0; padding: 10px 0 0 53px; list-style: none; color: #267fe1; font: 700 18px/27.500px Lato; }
.ad-list li { display: flex; gap: 9px; height: 27.500px; align-items: center; }
.ad-list svg { width: 18px; height: 18px; margin-top: -2px; }
.ad-list small { font-size: 15px; }
.l1 span { transform: scaleX(1.062); } .l2 span { transform: scaleX(1.045); } .l3 span { transform: scaleX(1.02); }
.ad-url { height: 22px; background: #69be0f; color: #fff; font: 700 11px/22px Lato; padding-left: 98px; }
.ad-url span { transform: scaleX(.915); }
.rule { width: 1px; height: 291px; background: #ddd; margin-left: 94px; }

/* floating controls */
.socials { position: absolute; left: 0; top: 177px; }
.socials b { width: 40px; height: 40px; display: flex; align-items: center; justify-content: center; }
.socials svg { width: 16px; height: 16px; }
.s-fb { background: #3b5998; } .s-pi { background: #cb2027; } .s-li { background: #127bb6; } .s-re { background: #ff461a; } .s-tw { background: #00abf0; } .s-di { background: #546b9f; }
.totop { position: absolute; right: 17px; top: 460px; width: 40px; height: 40px; background: #999; border-radius: 5px 0 0 5px; display: flex; align-items: center; justify-content: center; }
.totop svg { width: 16px; height: 10px; }
.scrollbar { position: absolute; right: 0; top: 0; width: 17px; height: 625px; background: #f0f0f0; display: flex; flex-direction: column; align-items: center; padding: 7px 0; }
.scrollbar svg { width: 8px; height: 4px; }
.scrollbar i { width: 13px; height: 25px; background: #c1c1c1; margin: 286px 0 auto; }

/* taskbar */
.taskbar { height: 40px; flex: none; display: flex; background: linear-gradient(90deg, #20363f 0, #20343f 40%, #1c2b40 70%, #182541); color: #fff; }
.tb { width: 48px; height: 40px; display: flex; align-items: center; justify-content: center; position: relative; }
.tb svg { width: 24px; height: 24px; }
.apps { margin-left: 3px; display: flex; gap: 1px; }
.run::after { content: ""; position: absolute; left: 4px; right: 4px; bottom: 0; height: 2px; background: #76b9ed; }
.on { background: #50626b; }
.on::after { left: 0; right: 0; }
.tray { display: flex; align-items: center; margin-left: auto; font-size: 14px; white-space: nowrap; }
.cloud { width: 22px; height: 18px; }
.temp { width: 29px; margin: 0 9px 0 10px; letter-spacing: -.5px; }
.wx { width: 57px; letter-spacing: -.3px; }
.t-chev { width: 12px; height: 8px; margin-left: 16px; }
.t-meet { width: 14px; height: 18px; margin-left: 12px; }
.t-bat { width: 15px; height: 10px; margin-left: 10px; }
.t-wifi { width: 14px; height: 14px; margin-left: 11px; }
.t-vol { width: 17px; height: 12px; margin-left: 7px; }
.clock { width: 58px; margin-left: 9px; display: flex; flex-direction: column; align-items: center; font-size: 12px; line-height: 18px; letter-spacing: -.5px; }
.t-note { width: 26px; height: 26px; margin: 4px 0 0 17px; }
.note-n { font: 700 12px "Open Sans"; fill: #fff; }
.peek { width: 1px; height: 40px; background: #5f6a7c; margin: 0 4px 0 10px; }
```
